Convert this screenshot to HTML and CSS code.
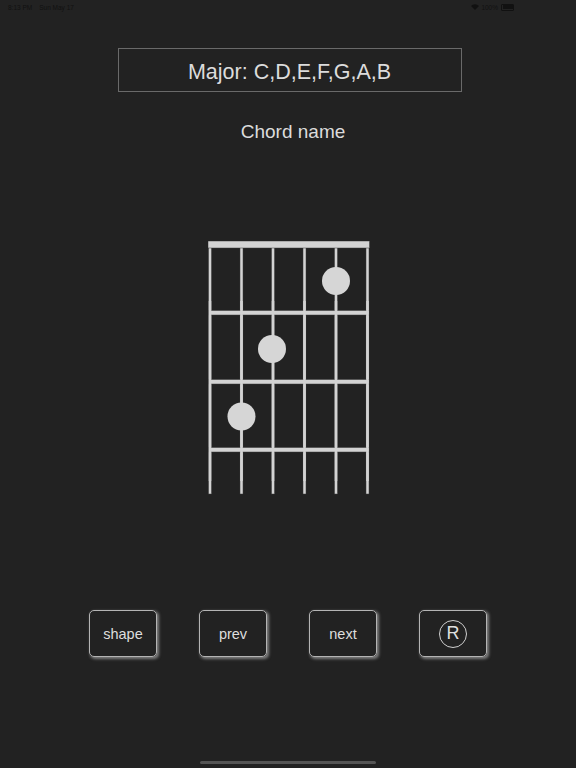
FILE: index.html
```html
<!DOCTYPE html>
<html>
<head>
<meta charset="utf-8">
<link rel="stylesheet" href="styles.css">
</head>
<body>
<div class="screen">
  <div class="status">
    <div class="status-left"><span>8:13 PM</span><span>Sun May 17</span></div>
    <div class="status-right">
      <svg class="wifi" width="8" height="6" viewBox="0 0 8 6"><path d="M4 6 L0 2 A5.7 5.7 0 0 1 8 2 Z" fill="#111"/></svg>
      <span>100%</span>
      <span class="battery"><span class="battery-fill"></span></span>
    </div>
  </div>

  <div class="title-box">Major: C,D,E,F,G,A,B</div>
  <div class="chord-name">Chord name</div>

  <div class="board-wrap">
    <svg class="board" width="164" height="256" viewBox="0 0 164 256">
      <g fill="#d3d3d3" stroke="#3a3a3a" stroke-width="0.5">
        <rect x="0.5" y="3.5" width="3" height="249.5"/>
        <rect x="32" y="3.5" width="3" height="249.5"/>
        <rect x="63.5" y="3.5" width="3" height="249.5"/>
        <rect x="95" y="3.5" width="3" height="249.5"/>
        <rect x="126.5" y="3.5" width="3" height="249.5"/>
        <rect x="158" y="3.5" width="3" height="249.5"/>
        <rect x="0" y="0" width="161.5" height="7"/>
        <rect x="1" y="69.5" width="160" height="4.5"/>
        <rect x="1" y="138.5" width="160" height="4.5"/>
        <rect x="1" y="206.5" width="160" height="4.5"/>
      </g>
      <g fill="#d3d3d3">
        <rect x="0.75" y="60" width="2.5" height="180"/>
        <rect x="32.25" y="60" width="2.5" height="180"/>
        <rect x="63.75" y="60" width="2.5" height="180"/>
        <rect x="95.25" y="60" width="2.5" height="180"/>
        <rect x="126.75" y="60" width="2.5" height="180"/>
        <rect x="158.25" y="60" width="2.5" height="180"/>
      </g>
      <g fill="#d6d6d6">
        <circle cx="128" cy="40" r="14"/>
        <circle cx="64" cy="108" r="14"/>
        <circle cx="33.5" cy="175.5" r="14"/>
      </g>
    </svg>
  </div>

  <div class="buttons">
    <div class="btn">shape</div>
    <div class="btn">prev</div>
    <div class="btn">next</div>
    <div class="btn"><span class="r-circle">R</span></div>
  </div>

  <div class="home-bar"></div>
</div>
</body>
</html>
```
FILE: styles.css
```css
html, body {
  margin: 0;
  padding: 0;
  background: #222222;
}
.screen {
  width: 576px;
  height: 768px;
  display: flex;
  flex-direction: column;
  align-items: center;
  font-family: "Liberation Sans", Arial, sans-serif;
  color: #dcdcdc;
  position: relative;
}
.status {
  width: 100%;
  box-sizing: border-box;
  height: 14px;
  padding: 0 62px 0 8px;
  display: flex;
  justify-content: space-between;
  align-items: center;
  font-size: 6.5px;
  color: #111;
}
.status-left {
  display: flex;
  gap: 7px;
}
.status-right {
  display: flex;
  align-items: center;
  gap: 2px;
}
.battery {
  width: 10px;
  height: 4px;
  border: 0.5px solid #111;
  border-radius: 1px;
  display: flex;
  padding: 0.5px;
  margin-left: 1px;
}
.battery-fill {
  flex: 1;
  background: #111;
}
.title-box {
  margin-top: 34px;
  width: 342px;
  height: 42px;
  box-sizing: content-box;
  border: 1px solid #6a6a6a;
  display: flex;
  align-items: center;
  justify-content: center;
  font-size: 21.5px;
  margin-left: 3px;
  padding-top: 0;
}
.title-text {
  display: block;
}
.title-box {
  padding-top: 5px;
  height: 37px;
}
.chord-name {
  margin-top: 28px;
  font-size: 19px;
  line-height: 24px;
  margin-left: 10px;
}
.board-wrap {
  margin-top: 97px;
  margin-left: 4px;
  height: 256px;
}
.board {
  display: block;
}
.buttons {
  margin-top: 113px;
  display: flex;
  gap: 42px;
}
.btn {
  width: 66px;
  height: 45px;
  border: 1.5px solid #b4b4b4;
  border-radius: 5px;
  box-shadow: 1.5px 1.5px 3px rgba(200,200,200,0.55);
  display: flex;
  align-items: center;
  justify-content: center;
  font-size: 14.5px;
  color: #dedede;
}
.r-circle {
  width: 26px;
  height: 26px;
  border: 1px solid #d0d0d0;
  border-radius: 50%;
  display: flex;
  align-items: center;
  justify-content: center;
  font-size: 18px;
}
.home-bar {
  position: absolute;
  bottom: 4px;
  left: 200px;
  width: 176px;
  height: 3px;
  border-radius: 2px;
  background: #555;
}
```
